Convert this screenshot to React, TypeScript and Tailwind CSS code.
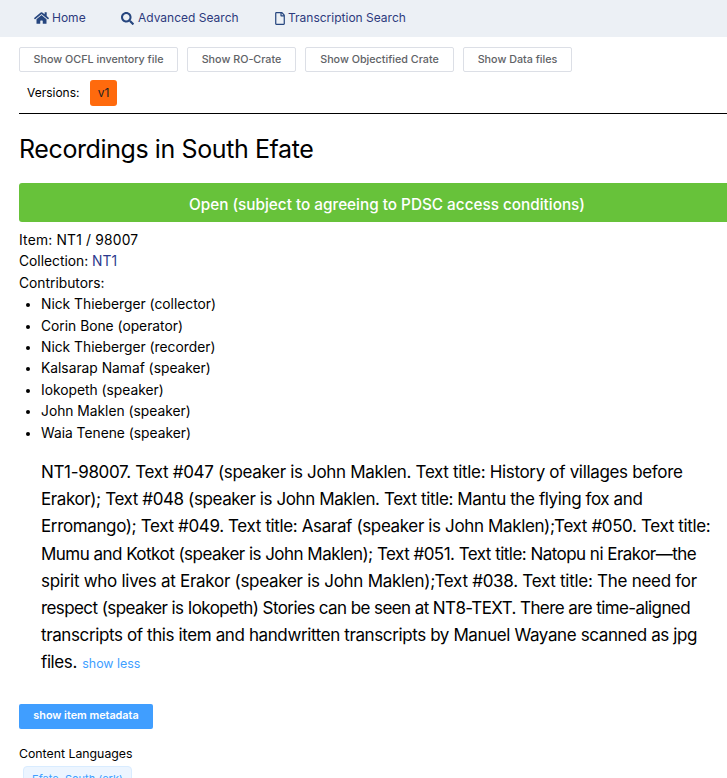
import { FaHome, FaSearch, FaRegFile } from 'react-icons/fa'

const contributors = [
  'Nick Thieberger (collector)',
  'Corin Bone (operator)',
  'Nick Thieberger (recorder)',
  'Kalsarap Namaf (speaker)',
  'Iokopeth (speaker)',
  'John Maklen (speaker)',
  'Waia Tenene (speaker)',
]

const crateButtons = [
  { label: 'Show OCFL inventory file', width: 'w-[159px]' },
  { label: 'Show RO-Crate', width: 'w-[109px]' },
  { label: 'Show Objectified Crate', width: 'w-[149px]' },
  { label: 'Show Data files', width: 'w-[109px]' },
]

// line breaks and tracking follow the screenshot line by line
const description = [
  { text: 'NT1-98007. Text #047 (speaker is John Maklen. Text title: History of villages before', track: 'tracking-[-0.33px]' },
  { text: 'Erakor); Text #048 (speaker is John Maklen. Text title: Mantu the flying fox and', track: 'tracking-[-0.4px]' },
  { text: 'Erromango); Text #049. Text title: Asaraf (speaker is John Maklen);Text #050. Text title:', track: 'tracking-[-0.37px]' },
  { text: 'Mumu and Kotkot (speaker is John Maklen); Text #051. Text title: Natopu ni Erakor—the', track: 'tracking-[-0.53px]' },
  { text: 'spirit who lives at Erakor (speaker is John Maklen);Text #038. Text title: The need for', track: 'tracking-[-0.28px]' },
  { text: 'respect (speaker is Iokopeth) Stories can be seen at NT8-TEXT. There are time-aligned', track: 'tracking-[-0.59px]' },
  { text: 'transcripts of this item and handwritten transcripts by Manuel Wayane scanned as jpg', track: 'tracking-[-0.39px]' },
]

export default function App() {
  return (
    <div className="h-[778px] w-[727px] overflow-hidden bg-white font-['Inter',sans-serif] text-[14px] text-black">
      <nav className="flex h-[37px] items-center bg-[#ecf0f5] pb-[1px] pl-[34px] text-[12px] text-[#2c3a7d]">
        <a className="flex w-[87px] items-center gap-[3px]">
          <FaHome className="h-[14px] w-[15px] text-[#26467f]" />
          Home
        </a>
        <a className="flex w-[154px] items-center gap-[4px]">
          <FaSearch className="h-[13px] w-[13px] text-[#26467f]" />
          Advanced Search
        </a>
        <a className="flex items-center gap-[3px]">
          <FaRegFile className="h-[13px] w-[10px] text-[#26467f]" />
          Transcription Search
        </a>
      </nav>

      <div className="ml-[19px]">
        <div className="mt-[10px] flex gap-[9px]">
          {crateButtons.map((b) => (
            <button
              key={b.label}
              className={`${b.width} flex h-[25px] items-center justify-center whitespace-nowrap rounded-[2px] border border-[#dcdfe6] bg-white pt-[2px] text-[10.75px] font-medium text-[#606266]`}
            >
              {b.label}
            </button>
          ))}
        </div>

        <div className="mt-[8px] flex items-center border-b border-black pb-[7px] pl-[8px] text-[12px]">
          <span className="w-[63px]">Versions:</span>
          <span className="flex h-[26px] w-[27px] items-center justify-center rounded-[3px] bg-[#ff6a0d] text-[#222]">v1</span>
        </div>

        <h1 className="mt-[19px] text-[25px] leading-[32px] tracking-[-0.4px]">Recordings in South Efate</h1>

        <div className="mt-[18px] flex h-[39px] w-[736px] items-center justify-center rounded-l-[3px] bg-[#67c23a] pt-[5px] text-[15.3px] font-medium text-white">
          Open (subject to agreeing to PDSC access conditions)
        </div>

        <div className="mt-[8px] text-[13.8px] leading-[21.4px]">
          <p className="tracking-[0.2px]">Item: NT1 / 98007</p>
          <p>
            Collection: <a className="text-[#2c3a8d]">NT1</a>
          </p>
          <p>Contributors:</p>
          <ul className="list-disc pl-[22px]">
            {contributors.map((c) => (
              <li key={c}>{c}</li>
            ))}
          </ul>
        </div>

        <div className="mt-[15px] pl-[22px] text-[17px] leading-[27.2px]">
          {description.map((line) => (
            <p key={line.text} className={`whitespace-nowrap ${line.track}`}>{line.text}</p>
          ))}
          <p className="tracking-[-0.4px]">
            files. <a className="ml-[1px] text-[12.4px] tracking-normal text-[#409eff]">show less</a>
          </p>
        </div>

        <button className="mt-[26px] flex h-[25px] w-[134px] items-center justify-center rounded-[2px] bg-[#409eff] text-[10.8px] font-semibold text-white">
          show item metadata
        </button>

        <p className="mt-[15px] text-[12.3px] leading-[20px]">Content Languages</p>
        <span className="ml-[4px] mt-[2px] inline-flex h-[28px] w-[109px] items-center justify-center rounded-[4px] border border-[#d9ecff] bg-[#ecf5ff] text-[11px] text-[#409eff]">
          Efate, South (erk)
        </span>
      </div>
    </div>
  )
}
